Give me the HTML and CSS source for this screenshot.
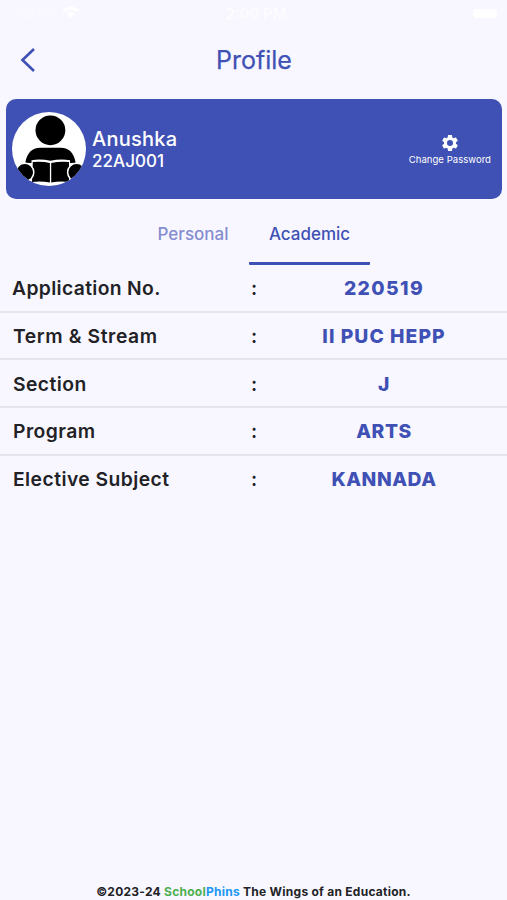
FILE: index.html
```html
<!DOCTYPE html>
<html lang="en">
<head>
<meta charset="utf-8">
<title>Profile</title>
<link rel="stylesheet" href="styles.css">
</head>
<body>
<div class="status">
  <div class="carrier"><span>Carrier</span>
    <svg width="17" height="12" viewBox="0 0 17 12"><path d="M0 4Q8.500-3 17 4L15 6Q8.500 1 2 6ZM4 7.500Q8.500 4 13 7.500L8.500 12Z" fill="#fff"/></svg>
  </div>
  <span class="clock">2:00 PM</span>
  <div class="battery"><i></i></div>
</div>
<header class="header">
  <svg class="back" width="16" height="26" viewBox="0 0 16 26"><path d="M14 2L2.500 13L14 24" fill="none" stroke="#3f51b5" stroke-width="2.700"/></svg>
  <h1>Profile</h1>
</header>
<section class="card">
  <svg class="avatar" width="74" height="74" viewBox="0 0 74 74">
    <clipPath id="round"><circle cx="37" cy="37" r="37"/></clipPath>
    <circle cx="37" cy="37" r="37" fill="#fff"/>
    <g clip-path="url(#round)">
      <circle cx="38.400" cy="18.300" r="14.900"/>
      <path d="M13.300 50.700C15 41 20 35.700 28 35.700H49C57 35.700 62 41 63.700 50.700L58 51V48.200Q48 46.800 38.500 48.800Q29 46.800 19.500 48.200V51Z"/>
      <path d="M20.800 50Q30 49 37.900 51V70.500Q29 69 20 70Z"/>
      <path d="M39.200 51Q48 49 57 50V70Q48 69 39.200 70.500Z"/>
      <g stroke="#fff" stroke-width="1.500">
        <circle cx="12.800" cy="60.300" r="9"/>
        <circle cx="64.600" cy="60.300" r="9"/>
      </g>
    </g>
  </svg>
  <div class="who"><div class="name">Anushka</div><div class="roll">22AJ001</div></div>
  <div class="change">
    <svg width="20" height="20" viewBox="0 0 24 24"><path fill="#fff" d="M19.140 12.940c.04-.3.060-.61.060-.94s-.02-.64-.07-.94l2.030-1.580a.49.49 0 0 0 .12-.61l-1.920-3.320a.49.49 0 0 0-.59-.22l-2.390.96c-.5-.38-1.030-.7-1.620-.94l-.36-2.540A.48.480 0 0 0 13.920 2.400h-3.840c-.24 0-.43.170-.47.410l-.36 2.540c-.59.240-1.130.57-1.620.94l-2.390-.96a.48.480 0 0 0-.59.220L2.740 8.870a.48.480 0 0 0 .12.610l2.030 1.580c-.05.3-.09.630-.09.940s.02.640.07.940l-2.030 1.580a.49.490 0 0 0-.12.610l1.920 3.320c.12.220.37.290.59.220l2.390-.96c.5.380 1.030.7 1.620.94l.36 2.540c.05.240.24.410.48.410h3.840c.24 0 .44-.17.470-.41l.36-2.540c.59-.24 1.130-.56 1.620-.94l2.390.96c.22.080.47 0 .59-.22l1.920-3.320a.48.480 0 0 0-.12-.61zM12 15.600A3.600 3.600 0 1 1 12 8.400a3.600 3.600 0 0 1 0 7.200z"/></svg>
    <span>Change Password</span>
  </div>
</section>
<nav class="tabs"><div class="tab">Personal</div><div class="tab active">Academic</div></nav>
<main class="rows">
  <div class="row"><span class="label application">Application No.</span><span class="colon">:</span><span class="value number">220519</span></div>
  <div class="row"><span class="label term">Term &amp; Stream</span><span class="colon">:</span><span class="value stream">II PUC HEPP</span></div>
  <div class="row"><span class="label">Section</span><span class="colon">:</span><span class="value">J</span></div>
  <div class="row"><span class="label">Program</span><span class="colon">:</span><span class="value">ARTS</span></div>
  <div class="row"><span class="label">Elective Subject</span><span class="colon">:</span><span class="value">KANNADA</span></div>
</main>
<footer class="footer">©2023-24 <span class="green">School</span><span class="blue">Phins</span> The Wings of an Education.</footer>
</body>
</html>
```
FILE: styles.css
```css
* { box-sizing: border-box; }
body {
  margin: 0;
  height: 900px;
  display: flex;
  flex-direction: column;
  background: #f8f7ff;
  color: #222226;
  font-family: Inter, "Liberation Sans", sans-serif;
  overflow: hidden;
}
.status {
  height: 26px;
  padding: 0 10px 0 15px;
  display: grid;
  grid-template-columns: 1fr auto 1fr;
  align-items: center;
  color: #fdfdff;
  font-size: 15px;
}
.carrier { display: flex; align-items: center; gap: 4px; font-size: 13px; color: #fafaff; }
.carrier svg { margin-top: -3px; }
.clock { font-weight: 500; }
.battery { justify-self: end; }
.battery i { display: block; width: 24px; height: 9px; border-radius: 3px; background: #fff; }
.header {
  height: 72px;
  padding: 0 20px;
  display: grid;
  grid-template-columns: 16px 1fr 16px;
  align-items: center;
}
.back { margin-top: -4px; }
h1 {
  margin: -5px 0 0 1px;
  text-align: center;
  color: #3f51b5;
  font-size: 25px;
  line-height: 30px;
  font-weight: 400;
  letter-spacing: 0;
  -webkit-text-stroke: .25px #3f51b5;
}
.card {
  height: 100px;
  flex: none;
  margin: 1px 5px 0 6px;
  padding: 0 11px 0 6px;
  display: flex;
  align-items: center;
  border-radius: 10px;
  background: #3f51b5;
  color: #fff;
}
.who { margin-left: 6px; flex: 1; }
.name { font-size: 20px; line-height: 24px; font-weight: 500; letter-spacing: .25px; }
.roll { font-size: 17px; line-height: 20px; font-weight: 500; letter-spacing: .05px; }
.change { display: flex; flex-direction: column; align-items: center; font-size: 9.500px; line-height: 12px; letter-spacing: .05px; margin-top: 1px; }
.change svg { margin-bottom: 1px; }
.tabs { height: 66px; display: flex; justify-content: center; color: #858dcf; font-size: 17px; font-weight: 500; }
.tab { width: 112px; text-align: center; line-height: 71px; height: 66px; letter-spacing: 0; }
.active { width: 121px; color: #3f51b5; border-bottom: 3px solid #3f51b5; border-radius: 1px; }
.rows { flex: 1; }
.row {
  height: 47.700px;
  padding-top: 1px;
  display: grid;
  grid-template-columns: 247px 14px 1fr;
  align-items: center;
  border-bottom: 2px solid #e4e3ee;
  font-size: 19.300px;
  line-height: 24px;
  font-weight: 630;
  letter-spacing: .45px;
}
.row:last-child { border-bottom: 0; padding-top: 0; height: 46px; }
.label { padding-left: 13px; }
.application { padding-left: 12px; letter-spacing: .35px; }
.term { letter-spacing: .6px; }
.colon { text-align: center; letter-spacing: 0; }
.value { text-align: center; color: #3f51b5; font-weight: 850; letter-spacing: .55px; }
.number { letter-spacing: 1.400px; }
.stream { letter-spacing: 1.050px; }
.footer { height: 18px; line-height: 19px; text-align: center; font-size: 12px; font-weight: 700; letter-spacing: .26px; }
.green { color: #4caf50; }
.blue { color: #2196f3; }
```
